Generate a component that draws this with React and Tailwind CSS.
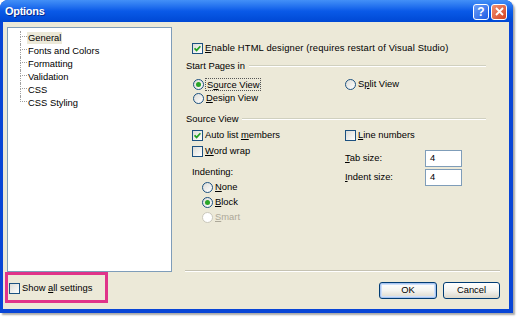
import React from "react";

function Check({ checked, disabled }) {
  return (
    <span
      className={
        "w-[11px] h-[11px] border flex items-center justify-center shrink-0 " +
        (disabled
          ? "border-[#cac8bb] bg-white"
          : "border-[#1c5180] bg-linear-to-br from-[#dcdcd7] to-white")
      }
    >
      {checked && (
        <svg width="7" height="7" viewBox="0 0 7 7">
          <path d="M0.6 3.3 L2.6 5.4 L6.4 1.2" stroke="#21a121" strokeWidth="1.7" fill="none" />
        </svg>
      )}
    </span>
  );
}

function Radio({ checked, disabled }) {
  return (
    <span
      className={
        "w-[11px] h-[11px] rounded-full border flex items-center justify-center shrink-0 " +
        (disabled
          ? "border-[#cac8bb] bg-white"
          : "border-[#1c5180] bg-linear-to-br from-[#dcdcd7] to-white")
      }
    >
      {checked && <span className="w-[5px] h-[5px] rounded-full bg-[#2aa527]" />}
    </span>
  );
}

function U({ children }) {
  return <span className="underline underline-offset-[1px]">{children}</span>;
}

function Header({ children, mt }) {
  return (
    <div className={"h-[14px] flex items-center pl-[1px] mr-[14px] " + mt}>
      <span className="whitespace-nowrap">{children}</span>
      <div className="flex-1 ml-[4px] h-[2px] border-t border-t-[#d0d0bf] border-b border-b-white" />
    </div>
  );
}

function TreeRow({ label, last, selected }) {
  return (
    <div className="h-[13px] flex">
      <div className="w-[7px] flex flex-col shrink-0">
        <div className="h-[6px] border-l border-b border-dotted border-[#a0a0a0]" />
        <div className={"flex-1 " + (last ? "" : "border-l border-dotted border-[#a0a0a0]")} />
      </div>
      <div className="flex items-center">
        <span className={"px-[1px] leading-[12px] " + (selected ? "bg-[#ece9d8]" : "")}>{label}</span>
      </div>
    </div>
  );
}

function Btn({ children, focused, w }) {
  return (
    <div
      className={
        "h-[17px] rounded-[3px] border border-[#003c74] bg-linear-to-b from-white via-[#f4f4f0] to-[#dcd8cc] flex items-center justify-center " +
        w +
        (focused ? " shadow-[inset_0_0_0_1px_#a8c4f0,inset_0_0_0_2px_#cee0fa]" : "")
      }
    >
      {children}
    </div>
  );
}

export default function App() {
  return (
    <div className="w-[518px] h-[317px] bg-white overflow-hidden font-['Liberation_Sans',Arial,sans-serif] text-[9.4px] text-black">
      <div className="w-[513px] h-[313px] rounded-t-[8px] bg-[#0845d6] flex flex-col shadow-[2px_2px_2px_rgba(0,0,0,0.35)]">
        {/* title bar */}
        <div className="h-[22px] rounded-t-[8px] bg-linear-to-b from-[#4390f7] via-[#0a5ae8] to-[#0048d4] flex items-center pl-[5px] pr-[6px]">
          <span className="text-white font-bold text-[11px] [text-shadow:1px_1px_0_#0b2a8a] tracking-[-0.3px]">Options</span>
          <div className="ml-auto flex gap-[2px] mt-[1px]">
            <div className="w-[16px] h-[16px] rounded-[3px] border border-white bg-linear-to-br from-[#6d9ef7] to-[#1c5ae3] flex items-center justify-center text-white font-bold text-[12px] leading-none">?</div>
            <div className="w-[16px] h-[16px] rounded-[3px] border border-white bg-linear-to-br from-[#f09072] to-[#d4401c] flex items-center justify-center">
              <svg width="9" height="9" viewBox="0 0 9 9">
                <path d="M1 1 L8 8 M8 1 L1 8" stroke="white" strokeWidth="1.8" />
              </svg>
            </div>
          </div>
        </div>
        {/* client */}
        <div className="flex-1 ml-[3px] mr-[4px] mb-[4px] bg-[#ece9d8] flex flex-col">
          <div className="h-[250px] flex">
            {/* tree */}
            <div className="ml-[4px] mt-[5px] w-[165px] h-[245px] border border-[#7f9db9] bg-white pt-[3px] pl-[12px]">
              <TreeRow label="General" selected />
              <TreeRow label="Fonts and Colors" />
              <TreeRow label="Formatting" />
              <TreeRow label="Validation" />
              <TreeRow label="CSS" />
              <TreeRow label="CSS Styling" last />
            </div>
            {/* right panel */}
            <div className="ml-[13px] mr-[9px] flex-1 flex flex-col">
              <div className="mt-[19px] h-[14px] flex items-center pl-[7px] gap-[2px]">
                <Check checked />
                <span className="whitespace-nowrap tracking-[0.15px]"><U>E</U>nable HTML designer (requires restart of Visual Studio)</span>
              </div>
              <Header mt="mt-[4px]">Start Pages in</Header>
              <div className="mt-[4px] h-[14px] flex items-center pl-[8px]">
                <div className="w-[152px] flex items-center gap-[1px]">
                  <Radio checked />
                  <span className="border border-dotted border-[#555] px-[1px] leading-[11px]">S<U>o</U>urce View</span>
                </div>
                <div className="flex items-center gap-[2px]">
                  <Radio />
                  <span>S<U>p</U>lit View</span>
                </div>
              </div>
              <div className="h-[14px] flex items-center pl-[8px] gap-[2px]">
                <Radio />
                <span><U>D</U>esign View</span>
              </div>
              <Header mt="mt-[7px]">Source View</Header>
              <div className="mt-[2px] flex">
                <div className="w-[160px] flex flex-col">
                  <div className="h-[14px] flex items-center pl-[7px] gap-[2px]">
                    <Check checked />
                    <span>Auto list <U>m</U>embers</span>
                  </div>
                  <div className="mt-[2px] h-[14px] flex items-center pl-[7px] gap-[2px]">
                    <Check />
                    <span><U>W</U>ord wrap</span>
                  </div>
                  <div className="mt-[7px] h-[14px] flex items-center pl-[7px]">Indenting:</div>
                  <div className="mt-[1px] h-[15px] flex items-center pl-[17px] gap-[2px]">
                    <Radio />
                    <span><U>N</U>one</span>
                  </div>
                  <div className="h-[15px] flex items-center pl-[17px] gap-[2px]">
                    <Radio checked />
                    <span><U>B</U>lock</span>
                  </div>
                  <div className="h-[15px] flex items-center pl-[17px] gap-[2px] text-[#aca899]">
                    <Radio disabled />
                    <span><U>S</U>mart</span>
                  </div>
                </div>
                <div className="flex flex-col">
                  <div className="h-[14px] flex items-center gap-[2px]">
                    <Check />
                    <span><U>L</U>ine numbers</span>
                  </div>
                  <div className="mt-[8px] h-[17px] flex items-center">
                    <span className="w-[80px]"><U>T</U>ab size:</span>
                    <div className="w-[37px] h-[17px] border border-[#7f9db9] bg-white flex items-center pl-[4px]">4</div>
                  </div>
                  <div className="mt-[2px] h-[17px] flex items-center">
                    <span className="w-[80px]"><U>I</U>ndent size:</span>
                    <div className="w-[37px] h-[17px] border border-[#7f9db9] bg-white flex items-center pl-[4px]">4</div>
                  </div>
                </div>
              </div>
              <div className="mt-auto h-[2px] border-t border-t-[#c5c2b2] border-b border-b-white" />
            </div>
          </div>
          {/* bottom */}
          <div className="flex-1 flex items-start">
            <div className="ml-[2px] w-[103px] h-[31px] border-[3px] border-[#e0338a] flex items-center pl-[1px] pt-[2px] gap-[2px]">
              <Check />
              <span className="whitespace-nowrap">Show <U>a</U>ll settings</span>
            </div>
            <div className="ml-auto mr-[9px] mt-[10px] flex gap-[6px]">
              <Btn focused w="w-[58px]">OK</Btn>
              <Btn w="w-[57px]">Cancel</Btn>
            </div>
          </div>
        </div>
      </div>
    </div>
  );
}
